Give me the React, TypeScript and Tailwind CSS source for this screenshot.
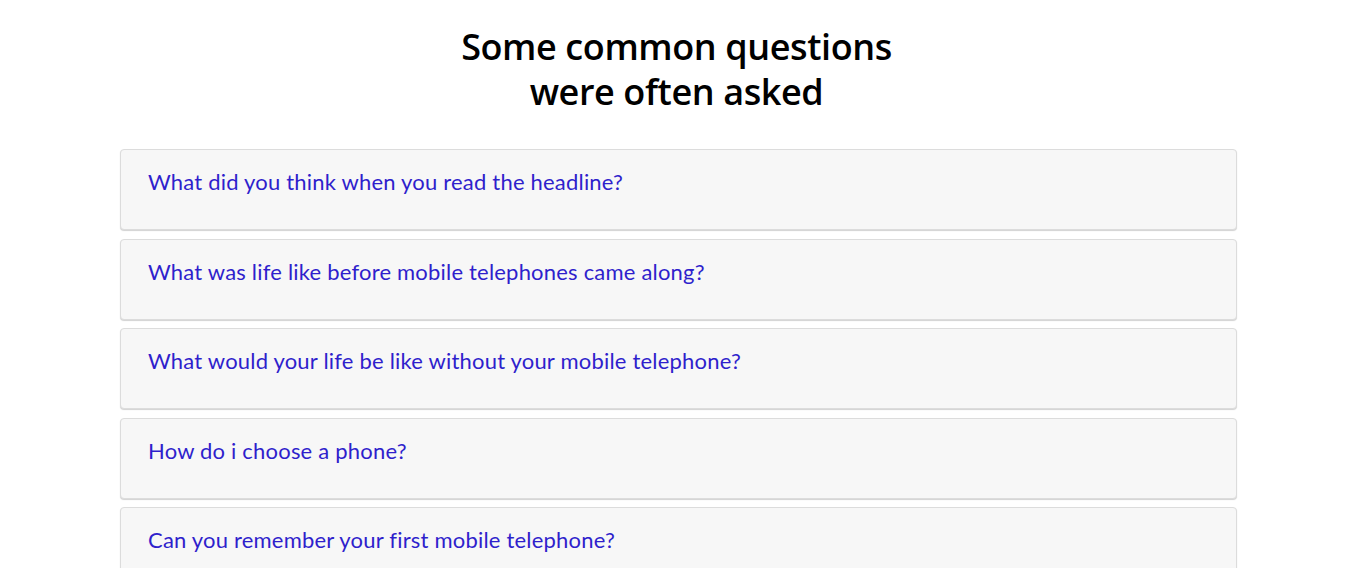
const questions = [
  'What did you think when you read the headline?',
  'What was life like before mobile telephones came along?',
  'What would your life be like without your mobile telephone?',
  'How do i choose a phone?',
  'Can you remember your first mobile telephone?',
]

export default function App() {
  return (
    <div className="min-h-screen bg-white pt-[24px]">
      <h2 className="text-center font-['Open_Sans',sans-serif] text-[36px] font-semibold leading-[45px] tracking-[-0.4px] text-black">
        Some common questions
        <br />
        were often asked
      </h2>

      <div className="ml-[120px] mt-[35px] flex w-[1117px] flex-col gap-[8.5px]">
        {questions.map((q) => (
          <div
            key={q}
            className="h-[81px] rounded-[4px] border border-[#dcdcdc] bg-[#f7f7f7] px-[27px] pt-[18px] shadow-[0_1px_1px_rgba(0,0,0,0.18)]"
          >
            <p className="font-['Lato',sans-serif] text-[22px] leading-[28px] tracking-[0.2px] text-[#2f1fcc]">{q}</p>
          </div>
        ))}
      </div>
    </div>
  )
}
